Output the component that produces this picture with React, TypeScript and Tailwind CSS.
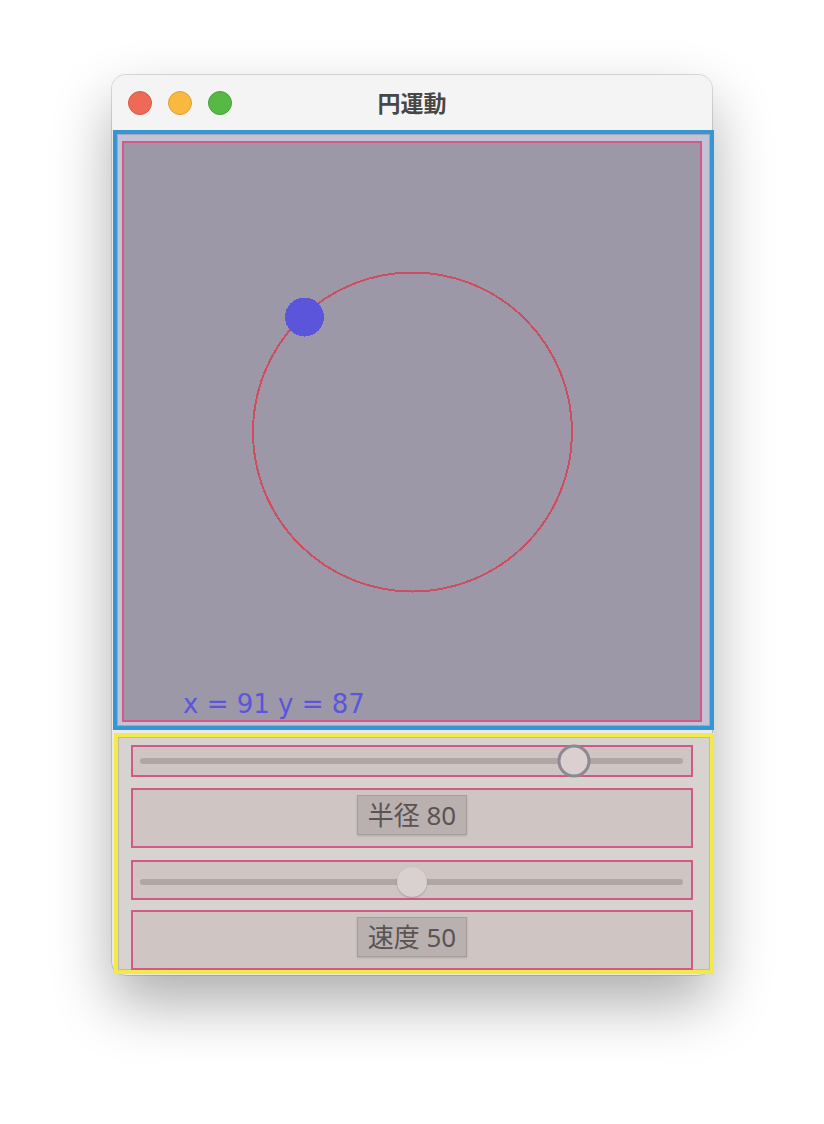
import React from "react";

type SliderProps = {
  value: number;
  boxClass: string;
  thumbClass: string;
};

function Slider({ value, boxClass, thumbClass }: SliderProps) {
  return (
    <div className={boxClass}>
      <div className="relative h-[6px] flex-1 rounded-full bg-[#b0a6a4]">
        <div
          className={thumbClass}
          style={{ left: `${value}%` }}
        />
      </div>
    </div>
  );
}

function Label({ text }: { text: string }) {
  return (
    <div className="flex h-[60px] justify-center border-2 border-[#d35a86] bg-[#cfc5c3] pt-[5px]">
      <div
        className="flex h-[40px] w-[110px] items-center justify-center border border-[#a59e9d] bg-[#b9b1af] text-[26px] leading-none text-[#5b5353] shadow-[0_1px_2px_rgba(0,0,0,0.15)]"
        style={{ fontFamily: '"Noto Sans", "Noto Sans CJK JP", sans-serif' }}
      >
        {text}
      </div>
    </div>
  );
}

export default function App() {
  const radius = 80;
  const speed = 50;
  return (
    <div className="h-[1124px] w-[824px] overflow-hidden bg-white pl-[112px] pt-[75px]">
      <div className="flex h-[900px] w-[600px] flex-col rounded-[14px] bg-[#e9e8ea] shadow-[0_0_0_1px_rgba(0,0,0,0.13),0_28px_60px_rgba(0,0,0,0.32)]">
        {/* title bar */}
        <div className="grid h-[55px] grid-cols-[1fr_auto_1fr] items-center rounded-t-[14px] bg-[#f4f4f4]">
          <div className="flex items-center gap-[16px] pl-[16px] pt-[1px]">
            <div className="h-[24px] w-[24px] rounded-full border border-[#d65a48] bg-[#ef6a56]" />
            <div className="h-[24px] w-[24px] rounded-full border border-[#dea236] bg-[#f8b93e]" />
            <div className="h-[24px] w-[24px] rounded-full border border-[#43a03a] bg-[#55b944]" />
          </div>
          <div
            className="text-[23px] font-bold leading-none text-[#474747]"
            style={{ fontFamily: '"Noto Sans CJK JP", sans-serif' }}
          >
            円運動
          </div>
          <div />
        </div>

        {/* canvas panel (blue) */}
        <div className="ml-[1px] h-[600px] w-[601px] border-4 border-[#3596d2] bg-[#c4c2d6] pb-[4px] pl-[5px] pr-[8px] pt-[7px] shadow-[inset_0_0_0_1px_#a7a4bb]">
          <div className="h-[581px] w-[580px] border-2 border-[#d35a86] bg-[#9d98a8]">
            <svg width="576" height="577" viewBox="0 0 576 577" className="block">
              <circle
                cx="288.5"
                cy="289"
                r="159.5"
                fill="none"
                stroke="#cd4f5f"
                strokeWidth="2"
                shapeRendering="crispEdges"
              />
              <circle cx="180.5" cy="174" r="19.5" fill="#5b55dc" shapeRendering="crispEdges" />
              <text
                x="59"
                y="570"
                fill="#5b55dc"
                fontSize="26"
                fontFamily='"DejaVu Sans", sans-serif'
              >
                x = 91 y = 87
              </text>
            </svg>
          </div>
        </div>

        {/* controls panel (yellow) */}
        <div className="ml-[2px] mt-[3px] flex h-[241px] w-[600px] flex-col border-4 border-[#f3e948] bg-[#d7d3ce] pl-[13px] pr-[17px] pt-[8px] shadow-[inset_0_0_0_1px_#bdb8b2]">
          <Slider
            value={radius}
            boxClass="flex h-[32px] items-center border-2 border-[#d35a86] bg-[#cfc5c3] pl-[7px] pr-[8px]"
            thumbClass="absolute top-1/2 h-[33px] w-[33px] -translate-x-1/2 -translate-y-1/2 rounded-full border-[3px] border-[#8d8991] bg-[#d9d0cf]"
          />
          <div className="h-[11px]" />
          <Label text={`半径 ${radius}`} />
          <div className="h-[12px]" />
          <Slider
            value={speed}
            boxClass="flex h-[40px] items-center border-2 border-[#d35a86] bg-[#cfc5c3] pl-[7px] pr-[8px] pt-[4px]"
            thumbClass="absolute top-1/2 h-[30px] w-[30px] -translate-x-1/2 -translate-y-1/2 rounded-full bg-[#d9d0d0] shadow-[0_1px_2px_rgba(0,0,0,0.2)]"
          />
          <div className="h-[10px]" />
          <Label text={`速度 ${speed}`} />
        </div>
      </div>
    </div>
  );
}
